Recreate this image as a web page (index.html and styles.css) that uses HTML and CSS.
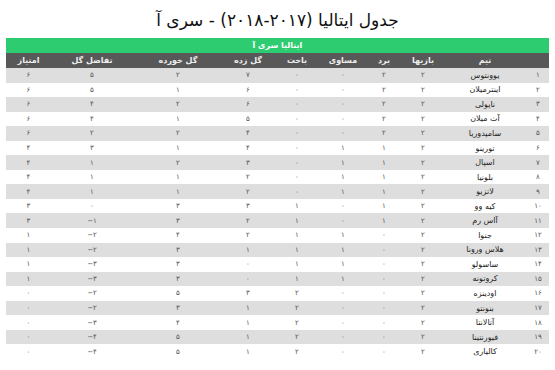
FILE: index.html
```html
<!DOCTYPE html>
<html lang="fa" dir="rtl">
  <head>
    <meta charset="UTF-8">
    <meta name="viewport" content="width=device-width, initial-scale=1.0">
    <title>جدول ایتالیا</title>
    <link rel="stylesheet" href="styles.css">
  </head>
  <body>

    <h1 class="page-title">جدول ایتالیا (۲۰۱۷-۲۰۱۸) - سری آ</h1>

    <table class="league-table">
      <colgroup>
        <col class="c-rank">
        <col class="c-team">
        <col class="c-played">
        <col class="c-win">
        <col class="c-draw">
        <col class="c-loss">
        <col class="c-gf">
        <col class="c-ga">
        <col class="c-gd">
        <col class="c-pts">
      </colgroup>
      <thead>
        <tr class="league-name">
          <th colspan="10">ایتالیا سری آ</th>
        </tr>
        <tr class="col-heads">
          <th></th>
          <th>تیم</th>
          <th>بازیها</th>
          <th>برد</th>
          <th>مساوی</th>
          <th>باخت</th>
          <th>گل زده</th>
          <th>گل خورده</th>
          <th>تفاضل گل</th>
          <th>امتیاز</th>
        </tr>
      </thead>
      <tbody>
        <tr><td>۱</td><td class="team">یوونتوس</td><td>۲</td><td>۲</td><td>۰</td><td>۰</td><td>۷</td><td>۲</td><td>۵</td><td>۶</td></tr>
        <tr><td>۲</td><td class="team">اینترمیلان</td><td>۲</td><td>۲</td><td>۰</td><td>۰</td><td>۶</td><td>۱</td><td>۵</td><td>۶</td></tr>
        <tr><td>۳</td><td class="team">ناپولی</td><td>۲</td><td>۲</td><td>۰</td><td>۰</td><td>۶</td><td>۲</td><td>۴</td><td>۶</td></tr>
        <tr><td>۴</td><td class="team">آث میلان</td><td>۲</td><td>۲</td><td>۰</td><td>۰</td><td>۵</td><td>۱</td><td>۴</td><td>۶</td></tr>
        <tr><td>۵</td><td class="team">سامپدوریا</td><td>۲</td><td>۲</td><td>۰</td><td>۰</td><td>۴</td><td>۲</td><td>۲</td><td>۶</td></tr>
        <tr><td>۶</td><td class="team">تورینو</td><td>۲</td><td>۱</td><td>۱</td><td>۰</td><td>۴</td><td>۱</td><td>۳</td><td>۴</td></tr>
        <tr><td>۷</td><td class="team">اسپال</td><td>۲</td><td>۱</td><td>۱</td><td>۰</td><td>۳</td><td>۲</td><td>۱</td><td>۴</td></tr>
        <tr><td>۸</td><td class="team">بلونیا</td><td>۲</td><td>۱</td><td>۱</td><td>۰</td><td>۲</td><td>۱</td><td>۱</td><td>۴</td></tr>
        <tr><td>۹</td><td class="team">لاتزیو</td><td>۲</td><td>۱</td><td>۱</td><td>۰</td><td>۲</td><td>۱</td><td>۱</td><td>۴</td></tr>
        <tr><td>۱۰</td><td class="team">کیه وو</td><td>۲</td><td>۱</td><td>۰</td><td>۱</td><td>۳</td><td>۳</td><td>۰</td><td>۳</td></tr>
        <tr><td>۱۱</td><td class="team">آاس رم</td><td>۲</td><td>۱</td><td>۰</td><td>۱</td><td>۲</td><td>۳</td><td class="neg">−۱</td><td>۳</td></tr>
        <tr><td>۱۲</td><td class="team">جنوا</td><td>۲</td><td>۰</td><td>۱</td><td>۱</td><td>۲</td><td>۴</td><td class="neg">−۲</td><td>۱</td></tr>
        <tr><td>۱۳</td><td class="team">هلاس ورونا</td><td>۲</td><td>۰</td><td>۱</td><td>۱</td><td>۱</td><td>۳</td><td class="neg">−۲</td><td>۱</td></tr>
        <tr><td>۱۴</td><td class="team">ساسولو</td><td>۲</td><td>۰</td><td>۱</td><td>۱</td><td>۰</td><td>۳</td><td class="neg">−۳</td><td>۱</td></tr>
        <tr><td>۱۵</td><td class="team">کروتونه</td><td>۲</td><td>۰</td><td>۱</td><td>۱</td><td>۰</td><td>۳</td><td class="neg">−۳</td><td>۱</td></tr>
        <tr><td>۱۶</td><td class="team">اودینزه</td><td>۲</td><td>۰</td><td>۰</td><td>۲</td><td>۳</td><td>۵</td><td class="neg">−۲</td><td>۰</td></tr>
        <tr><td>۱۷</td><td class="team">بنونتو</td><td>۲</td><td>۰</td><td>۰</td><td>۲</td><td>۱</td><td>۳</td><td class="neg">−۲</td><td>۰</td></tr>
        <tr><td>۱۸</td><td class="team">آتالانتا</td><td>۲</td><td>۰</td><td>۰</td><td>۲</td><td>۱</td><td>۴</td><td class="neg">−۳</td><td>۰</td></tr>
        <tr><td>۱۹</td><td class="team">فیورنتینا</td><td>۲</td><td>۰</td><td>۰</td><td>۲</td><td>۱</td><td>۵</td><td class="neg">−۴</td><td>۰</td></tr>
        <tr><td>۲۰</td><td class="team">کالیاری</td><td>۲</td><td>۰</td><td>۰</td><td>۲</td><td>۱</td><td>۵</td><td class="neg">−۴</td><td>۰</td></tr>
      </tbody>
    </table>

  </body>
</html>
```

FILE: styles.css
```css
body {
  font-family: "DejaVu Sans", "Noto Sans", sans-serif;
  margin: 0;
  padding: 0 6px;
  background-color: #fff;
  color: #333;
}

.page-title {
  margin: 0;
  height: 38px;
  line-height: 40px;
  font-size: 17px;
  font-weight: normal;
  text-align: center;
  color: #111;
}

.league-table {
  width: 543px;
  border-collapse: collapse;
  table-layout: fixed;
}

.c-rank { width: 22px; }
.c-team { width: 84px; }
.c-played { width: 40px; }
.c-win { width: 38px; }
.c-draw { width: 44px; }
.c-loss { width: 48px; }
.c-gf { width: 50px; }
.c-ga { width: 90px; }
.c-gd { width: 82px; }
.c-pts { width: 45px; }

.league-table th,
.league-table td {
  padding: 0;
  text-align: center;
  white-space: nowrap;
}

.league-name th {
  height: 14.5px;
  background-color: #2ecc71;
  color: #fff;
  font-size: 8px;
  font-weight: bold;
}

.col-heads th {
  height: 15.5px;
  background-color: #585858;
  color: #eee;
  font-size: 8px;
  font-weight: bold;
}

.league-table td {
  height: 14.55px;
  font-size: 7px;
  color: #555;
}

/* minus sign sits left of the digit */
.league-table td.neg {
  direction: ltr;
  unicode-bidi: isolate;
}

.league-table td.team {
  font-size: 8px;
  color: #222;
}

.league-table tbody tr:nth-child(odd) {
  background-color: #dedede;
}
```
